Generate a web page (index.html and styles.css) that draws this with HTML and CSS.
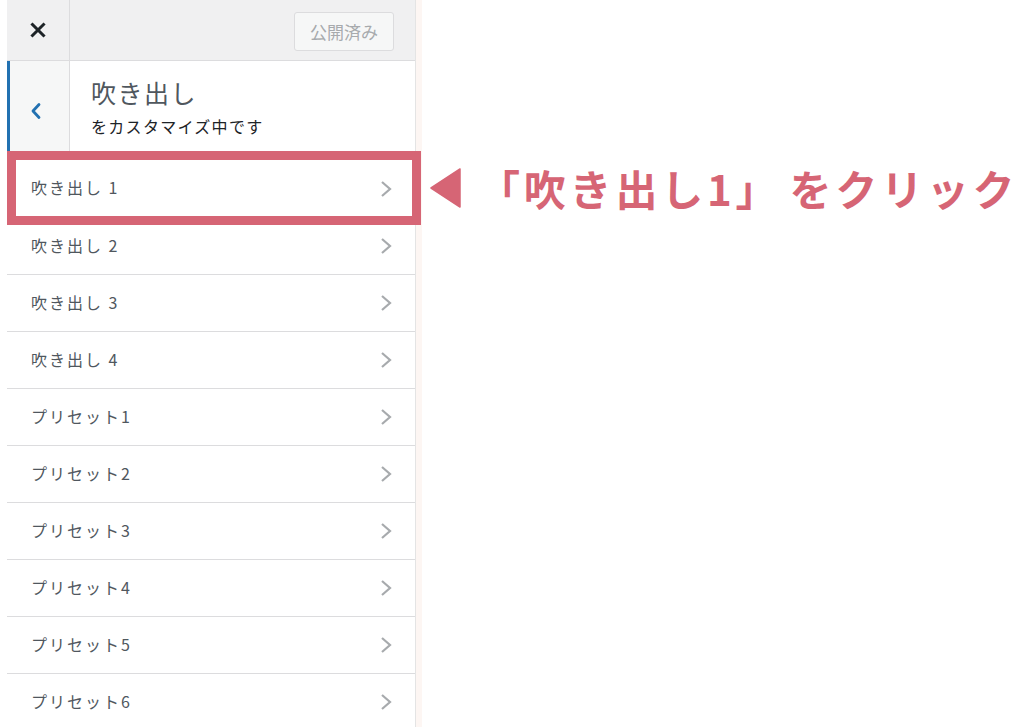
FILE: index.html
```html
<!DOCTYPE html>
<html lang="ja">
<head>
<meta charset="utf-8">
<link rel="stylesheet" href="styles.css">
</head>
<body>
<div class="panel">
  <div class="topbar">
    <div class="close">
      <svg width="16" height="16" viewBox="0 0 16 16"><path d="M2.5 2.5 L13.5 13.5 M13.5 2.5 L2.5 13.5" stroke="#1d2327" stroke-width="3" stroke-linecap="square"/></svg>
    </div>
    <div class="topbar-right">
      <div class="publish">公開済み</div>
    </div>
  </div>
  <div class="section-head">
    <div class="back">
      <svg width="12" height="18" viewBox="0 0 12 18"><path d="M9 2.5 L3 9 L9 15.5" fill="none" stroke="#2271b1" stroke-width="2.8" stroke-linecap="round" stroke-linejoin="round"/></svg>
    </div>
    <div class="head-text">
      <div class="title">吹き出し</div>
      <div class="sub">をカスタマイズ中です</div>
    </div>
  </div>
  <ul class="items">
    <li class="item"><span>吹き出し 1</span><svg class="chev" width="14" height="18" viewBox="0 0 14 18"><path d="M3 2 L11 9 L3 16" fill="none" stroke="#a7aaad" stroke-width="2.2"/></svg></li>
    <li class="item"><span>吹き出し 2</span><svg class="chev" width="14" height="18" viewBox="0 0 14 18"><path d="M3 2 L11 9 L3 16" fill="none" stroke="#a7aaad" stroke-width="2.2"/></svg></li>
    <li class="item"><span>吹き出し 3</span><svg class="chev" width="14" height="18" viewBox="0 0 14 18"><path d="M3 2 L11 9 L3 16" fill="none" stroke="#a7aaad" stroke-width="2.2"/></svg></li>
    <li class="item"><span>吹き出し 4</span><svg class="chev" width="14" height="18" viewBox="0 0 14 18"><path d="M3 2 L11 9 L3 16" fill="none" stroke="#a7aaad" stroke-width="2.2"/></svg></li>
    <li class="item"><span>プリセット1</span><svg class="chev" width="14" height="18" viewBox="0 0 14 18"><path d="M3 2 L11 9 L3 16" fill="none" stroke="#a7aaad" stroke-width="2.2"/></svg></li>
    <li class="item"><span>プリセット2</span><svg class="chev" width="14" height="18" viewBox="0 0 14 18"><path d="M3 2 L11 9 L3 16" fill="none" stroke="#a7aaad" stroke-width="2.2"/></svg></li>
    <li class="item"><span>プリセット3</span><svg class="chev" width="14" height="18" viewBox="0 0 14 18"><path d="M3 2 L11 9 L3 16" fill="none" stroke="#a7aaad" stroke-width="2.2"/></svg></li>
    <li class="item"><span>プリセット4</span><svg class="chev" width="14" height="18" viewBox="0 0 14 18"><path d="M3 2 L11 9 L3 16" fill="none" stroke="#a7aaad" stroke-width="2.2"/></svg></li>
    <li class="item"><span>プリセット5</span><svg class="chev" width="14" height="18" viewBox="0 0 14 18"><path d="M3 2 L11 9 L3 16" fill="none" stroke="#a7aaad" stroke-width="2.2"/></svg></li>
    <li class="item"><span>プリセット6</span><svg class="chev" width="14" height="18" viewBox="0 0 14 18"><path d="M3 2 L11 9 L3 16" fill="none" stroke="#a7aaad" stroke-width="2.2"/></svg></li>
  </ul>
</div>
<div class="highlight"></div>
<div class="callout">
  <svg class="tri" width="32" height="40" viewBox="0 0 32 40"><path d="M1 20 L30 1 L30 39 Z" fill="#d66575" stroke="#d66575" stroke-width="1.5" stroke-linejoin="round"/></svg>
  <span class="callout-text">「吹き出し1」<span class="gap"></span>をクリック</span>
</div>
</body>
</html>
```
FILE: styles.css
```css
html, body {
  margin: 0;
  padding: 0;
  background: #ffffff;
  height: 727px;
  overflow: hidden;
}
body {
  font-family: "Noto Sans CJK JP", "Noto Sans", sans-serif;
  padding-left: 7px;
}
.panel {
  width: 408px;
  height: 727px;
  border-right: 1px solid #e4e4e4;
  box-shadow: 6px 0 0 #fdf6f3;
  background: #fff;
  display: flex;
  flex-direction: column;
}
.topbar {
  height: 60px;
  background: #f0f0f1;
  border-bottom: 1px solid #dcdcde;
  display: flex;
  flex-shrink: 0;
}
.close {
  width: 62px;
  border-right: 1px solid #dcdcde;
  display: flex;
  align-items: center;
  justify-content: center;
  padding-bottom: 1px;
}
.topbar-right {
  flex: 1;
  display: flex;
  justify-content: flex-end;
  align-items: flex-start;
  padding: 12px 21px 0 0;
}
.publish {
  width: 100px;
  height: 39px;
  box-sizing: border-box;
  border: 1px solid #dcdcde;
  border-radius: 3px;
  background: #f6f7f7;
  color: #a7aaad;
  font-size: 17px;
  display: flex;
  align-items: center;
  justify-content: center;
}
.section-head {
  height: 99px;
  display: flex;
  flex-shrink: 0;
}
.back {
  border-left: 3px solid #2271b1;
  border-right: 1px solid #dcdcde;
  background: #f6f7f7;
  display: flex;
  align-items: center;
  justify-content: center;
  padding-top: 1px;
  padding-right: 7px;
  box-sizing: border-box;
  width: 63px;
}
.head-text {
  padding: 15px 0 0 21px;
}
.title {
  font-size: 25px;
  line-height: 32px;
  color: #50575e;
  letter-spacing: 1.5px;
}
.sub {
  font-size: 16px;
  line-height: 22px;
  margin-top: 7px;
  color: #1d2327;
  font-weight: 400;
  letter-spacing: 1.3px;
}
.items {
  list-style: none;
  margin: 0;
  padding: 0;
}
.item {
  height: 56px;
  border-bottom: 1px solid #dcdcde;
  display: flex;
  align-items: center;
  justify-content: space-between;
  padding: 0 22px 0 24px;
  font-size: 16px;
  color: #50575e;
  letter-spacing: 2px;
}
.item span {
  margin-top: -3px;
}
.item:first-child {
  border-bottom-color: transparent;
  padding-top: 1px;
}
.item:first-child span {
  margin-top: -5px;
}
.chev {
  display: block;
}
.highlight {
  position: absolute;
  left: 7px;
  top: 151px;
  width: 396px;
  height: 56px;
  border: 9px solid #d66575;
}
.callout {
  position: absolute;
  left: 430px;
  top: 158px;
  display: flex;
  align-items: center;
  height: 58px;
}
.tri {
  display: block;
  margin-top: 2px;
}
.callout-text {
  margin-left: 16px;
  font-size: 42px;
  font-weight: 700;
  color: #d66575;
  letter-spacing: 3.8px;
  white-space: nowrap;
}
.gap {
  display: inline-block;
  width: 8px;
}
```
